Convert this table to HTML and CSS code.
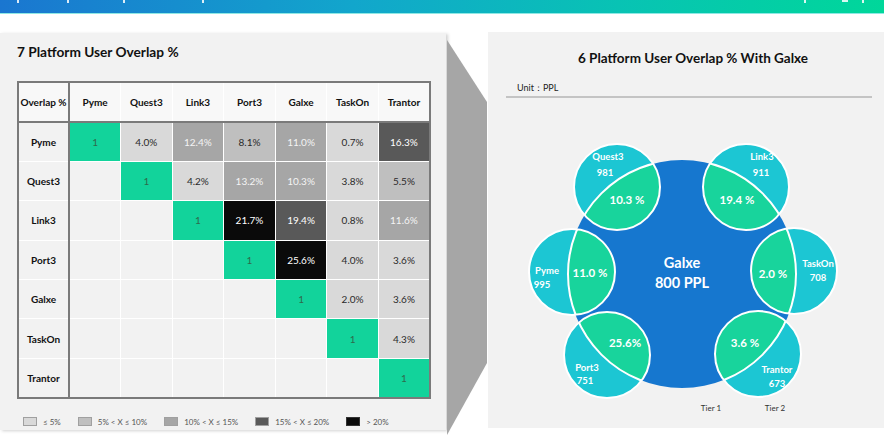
FILE: index.html
```html
<!DOCTYPE html>
<html>
<head>
<meta charset="utf-8">
<link rel="stylesheet" href="styles.css">
</head>
<body>
<div class="topbar">
  <span class="mark m1"></span><span class="mark m2"></span><span class="mark m3"></span><span class="mark m4"></span>
  <span class="spacer"></span>
  <span class="mark m5"></span><span class="mark m6"></span><span class="mark m7"></span>
</div>
<div class="main">
  <section class="panel left">
    <h2 class="title">7 Platform User Overlap %</h2>
    <table class="matrix">
      <colgroup><col class="c0"><col><col><col><col><col><col><col></colgroup>
      <tr class="head"><th class="rh">Overlap %</th><th>Pyme</th><th>Quest3</th><th>Link3</th><th>Port3</th><th>Galxe</th><th>TaskOn</th><th>Trantor</th></tr>
      <tr><th class="rh">Pyme</th><td class="one">1</td><td class="l1">4.0%</td><td class="l3">12.4%</td><td class="l2">8.1%</td><td class="l3">11.0%</td><td class="l1">0.7%</td><td class="l4">16.3%</td></tr>
      <tr><th class="rh">Quest3</th><td></td><td class="one">1</td><td class="l1">4.2%</td><td class="l3">13.2%</td><td class="l3">10.3%</td><td class="l1">3.8%</td><td class="l2">5.5%</td></tr>
      <tr><th class="rh">Link3</th><td></td><td></td><td class="one">1</td><td class="l5">21.7%</td><td class="l4">19.4%</td><td class="l1">0.8%</td><td class="l3">11.6%</td></tr>
      <tr><th class="rh">Port3</th><td></td><td></td><td></td><td class="one">1</td><td class="l5">25.6%</td><td class="l1">4.0%</td><td class="l1">3.6%</td></tr>
      <tr><th class="rh">Galxe</th><td></td><td></td><td></td><td></td><td class="one">1</td><td class="l1">2.0%</td><td class="l1">3.6%</td></tr>
      <tr><th class="rh">TaskOn</th><td></td><td></td><td></td><td></td><td></td><td class="one">1</td><td class="l1">4.3%</td></tr>
      <tr><th class="rh">Trantor</th><td></td><td></td><td></td><td></td><td></td><td></td><td class="one">1</td></tr>
    </table>
    <div class="legend">
      <div class="item"><span class="box l1"></span>≤ 5%</div>
      <div class="item"><span class="box l2"></span>5% &lt; X ≤ 10%</div>
      <div class="item"><span class="box l3"></span>10% &lt; X ≤ 15%</div>
      <div class="item"><span class="box l4"></span>15% &lt; X ≤ 20%</div>
      <div class="item"><span class="box l5"></span>&gt; 20%</div>
    </div>
  </section>
  <svg class="connector" width="42" height="405" viewBox="0 0 42 405">
    <polygon points="1,8 41,70 41,331 1,403" fill="#a6a6a6"/>
  </svg>
  <section class="panel right">
    <h2 class="rtitle">6 Platform User Overlap % With Galxe</h2>
    <div class="unit">Unit：PPL</div>
    <svg class="venn" width="396" height="330" viewBox="488 98 396 330">
      <defs>
        <clipPath id="bigc"><circle cx="682" cy="274" r="114"/></clipPath>
        <clipPath id="smallc">
          <circle cx="617" cy="187" r="43"/><circle cx="746" cy="187" r="43"/>
          <circle cx="572" cy="272" r="43"/><circle cx="794" cy="271" r="43"/>
          <circle cx="607" cy="355" r="43"/><circle cx="758" cy="354" r="43"/>
        </clipPath>
      </defs>
      <circle cx="682" cy="274" r="114" fill="#1677cf"/>
      <g fill="#1cc6d3">
        <circle cx="617" cy="187" r="43"/><circle cx="746" cy="187" r="43"/>
        <circle cx="572" cy="272" r="43"/><circle cx="794" cy="271" r="43"/>
        <circle cx="607" cy="355" r="43"/><circle cx="758" cy="354" r="43"/>
      </g>
      <g fill="#18d49c" clip-path="url(#bigc)">
        <circle cx="617" cy="187" r="43"/><circle cx="746" cy="187" r="43"/>
        <circle cx="572" cy="272" r="43"/><circle cx="794" cy="271" r="43"/>
        <circle cx="607" cy="355" r="43"/><circle cx="758" cy="354" r="43"/>
      </g>
      <circle cx="682" cy="274" r="114" fill="none" stroke="#fff" stroke-width="2" clip-path="url(#smallc)"/>
      <g fill="none" stroke="#fff" stroke-width="2">
        <circle cx="617" cy="187" r="43"/><circle cx="746" cy="187" r="43"/>
        <circle cx="572" cy="272" r="43"/><circle cx="794" cy="271" r="43"/>
        <circle cx="607" cy="355" r="43"/><circle cx="758" cy="354" r="43"/>
      </g>
      <g class="vt lbl">
        <text x="608" y="160">Quest3</text><text x="605" y="176">981</text>
        <text x="762" y="160">Link3</text><text x="761" y="176">911</text>
        <text x="547" y="274">Pyme</text><text x="542" y="288">995</text>
        <text x="818" y="267">TaskOn</text><text x="818" y="281">708</text>
        <text x="587" y="371">Port3</text><text x="585" y="384">751</text>
        <text x="777" y="373">Trantor</text><text x="777" y="387">673</text>
      </g>
      <g class="vt pct">
        <text x="627" y="204">10.3 %</text>
        <text x="737" y="204">19.4 %</text>
        <text x="590" y="277">11.0 %</text>
        <text x="773" y="278">2.0 %</text>
        <text x="625" y="347">25.6%</text>
        <text x="745" y="347">3.6 %</text>
      </g>
      <g class="vt big">
        <text x="682" y="268">Galxe</text>
        <text x="682" y="288">800 PPL</text>
      </g>
      <g class="tier">
        <text x="711" y="411">Tier 1</text>
        <text x="775" y="411">Tier 2</text>
      </g>
    </svg>
  </section>
</div>
</body>
</html>
```
FILE: styles.css
```css
* { box-sizing: border-box; }
html, body { margin: 0; padding: 0; }
body {
  width: 884px;
  height: 437px;
  overflow: hidden;
  background: #ffffff;
  font-family: Lato, "Open Sans", "Liberation Sans", sans-serif;
  color: #111;
}
.topbar {
  height: 14px;
  display: flex;
  align-items: flex-start;
  background: linear-gradient(90deg, #1a76d0 0%, #12a6cc 40%, #08c3b4 70%, #00d79a 100%);
  border-bottom: 1px solid #8fe8e4;
}
.mark { display: block; width: 2px; height: 3px; background: rgba(255,255,255,0.85); }
.m1 { margin-left: 17px; }
.m2 { margin-left: 48px; }
.m3 { margin-left: 54px; }
.m4 { margin-left: 77px; }
.spacer { flex: 1; }
.m5 { margin-right: 36px; }
.m6 { margin-right: 14px; width: 6px; height: 2px; }
.m7 { margin-right: 20px; }

.main {
  display: flex;
  align-items: flex-start;
  padding-top: 18px;
}
.panel { background: #f2f2f2; }
.left {
  width: 446px;
  height: 397px;
  margin-top: 1px;
  padding: 11px 0 0 17px;
  box-shadow: 2px 1px 3px rgba(0,0,0,0.18);
}
.title {
  margin: 0;
  font-size: 13.7px;
  line-height: 16px;
  font-weight: 700;
  color: #111;
}
.matrix {
  margin-top: 21px;
  width: 414px;
  table-layout: fixed;
  border-collapse: collapse;
  border: 2px solid #7a7a7a;
  font-size: 10px;
}
.matrix col.c0 { width: 51px; }
.matrix th, .matrix td {
  border: 1px solid #ffffff;
  height: 39.4px;
  padding: 0;
  text-align: center;
  vertical-align: middle;
  font-weight: 400;
  color: #222;
}
.matrix th { font-weight: 700; color: #111; }
.matrix tr.head th {
  height: 40px;
  background: #f8f8f8;
  border-bottom: 2px solid #7a7a7a;
}
.matrix th.rh { border-right: 2px solid #7a7a7a; }
.matrix .one { background: #12d39b; color: #2e6b4c; }
.l1 { background: #d9d9d9; }
.l2 { background: #bfbfbf; }
.l3 { background: #a6a6a6; }
.l4 { background: #595959; }
.l5 { background: #0a0a0a; }
.matrix .l1, .matrix .l2 { color: #2a2a2a; }
.matrix .l3 { color: #f4f4f4; }
.matrix .l4, .matrix .l5 { color: #ffffff; }

.legend {
  display: flex;
  align-items: center;
  gap: 17px;
  margin: 18px 0 0 6px;
  font-size: 8px;
  color: #555;
  line-height: 10px;
}
.legend .item { display: flex; align-items: center; gap: 6px; }
.legend .box {
  display: block;
  width: 14px;
  height: 9px;
  border: 1px solid #a0a0a0;
}
.legend .box.l5 { border-color: #333; }

.connector { display: block; flex: none; }
.right {
  width: 396px;
  height: 396px;
  padding-top: 18px;
}
.rtitle {
  margin: 0;
  padding-left: 14px;
  text-align: center;
  font-size: 13.5px;
  line-height: 16px;
  font-weight: 700;
  color: #111;
}
.unit {
  margin: 16px 12px 0 18px;
  padding: 0 0 2px 11px;
  font-size: 9px;
  line-height: 12px;
  color: #222;
  border-bottom: 2px solid #c4c4c4;
}
.venn { display: block; }
.vt text {
  fill: #ffffff;
  font-family: Lato, "Open Sans", sans-serif;
  font-weight: 700;
  text-anchor: middle;
}
.lbl text { font-size: 9.5px; }
.pct text { font-size: 11.5px; }
.big text { font-size: 14.5px; }
.tier text {
  fill: #333;
  font-family: Lato, "Open Sans", sans-serif;
  font-size: 8px;
  text-anchor: middle;
}
```
